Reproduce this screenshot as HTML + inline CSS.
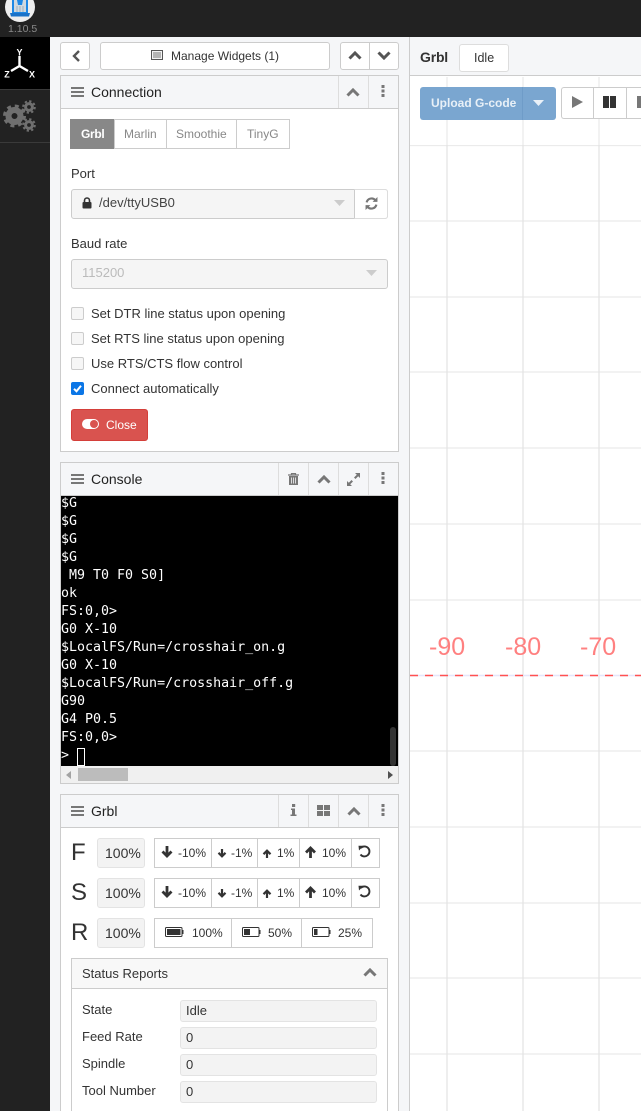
<!DOCTYPE html>
<html><head><meta charset="utf-8"><style>
*{box-sizing:border-box}
html,body{margin:0;padding:0;width:641px;height:1111px;overflow:hidden}
body{background:#f5f6f8;font:14px/20px "Liberation Sans",sans-serif;color:#333}
#w{position:absolute;left:0;top:0;width:641px;height:1111px;overflow:hidden;background:#f5f6f8}
.a{position:absolute}
.t{position:absolute;white-space:nowrap}
.btn{position:absolute;background:#fff;border:1px solid #ccc;border-radius:3px}
.panel{position:absolute;left:60px;width:339px;background:#fff;border:1px solid #ccc}
.head{position:absolute;background:#f5f6f8;border-bottom:1px solid #ccc;left:0;top:0;width:337px;height:33px}
.sep{position:absolute;top:0;width:1px;height:32px;background:#ddd}
.cb{position:absolute;left:71px;width:13px;height:13px;border:1px solid #ccc;border-radius:2px;background:#f6f6f6}
.box{position:absolute;background:#f3f3f3;border:1px solid #e3e3e3;border-radius:3px}
.grp{position:absolute;border:1px solid #ccc;background:#fff}
.s{position:absolute;top:0;width:1px;height:100%;background:#ccc}
svg{position:absolute;display:block}
.m{font-family:"DejaVu Sans Mono",monospace;font-size:13.3px;color:#fff;line-height:18px;position:absolute;left:61px;white-space:pre}
</style></head><body><div id="w">

<div class="a" style="left:0;top:0;width:641px;height:37px;background:#222"></div>
<div class="a" style="left:0;top:37px;width:50px;height:1074px;background:#222"></div>
<div class="a" style="left:0;top:37px;width:50px;height:52px;background:#000"></div>
<div class="a" style="left:0;top:89px;width:50px;height:1px;background:#3a3a3a"></div>
<div class="a" style="left:0;top:142px;width:50px;height:1px;background:#3a3a3a"></div>

<div class="a" style="left:5px;top:-8px;width:30px;height:30px;border-radius:50%;background:#eee"></div>
<svg style="left:10px;top:0" width="20" height="17" viewBox="0 0 20 17"><path d="M3 0V13H17V0" fill="#cfd8df" stroke="#1e88e5" stroke-width="2"/><path d="M7 0H13L12 5H8Z" fill="#1e88e5"/><path d="M7 6V12M10 6V12M13 6V12" stroke="#9fb0bd"/><path d="M0 13H20L19 16.500H1Z" fill="#1a72c8"/></svg>
<div class="t" style="left:8px;top:22px;font-size:10.5px;line-height:14px;color:#8a8a8a">1.10.5</div>

<svg style="left:0;top:45px" width="50" height="38" viewBox="0 0 50 38"><path d="M19.500 11V21M19.500 21L11 26M19.500 21L28 26" stroke="#fff" stroke-width="2.400" fill="none"/><text x="19.500" y="10.500" font-size="9" font-weight="bold" text-anchor="middle" fill="#fff" font-family="Liberation Sans">Y</text><text x="7" y="32.500" font-size="9" font-weight="bold" text-anchor="middle" fill="#fff" font-family="Liberation Sans">Z</text><text x="32" y="32.500" font-size="9" font-weight="bold" text-anchor="middle" fill="#fff" font-family="Liberation Sans">X</text></svg>

<svg style="left:3px;top:99px" width="34" height="34" viewBox="0 0 34 34" fill="#6f6f6f">
<circle cx="11.500" cy="17" r="6" fill="none" stroke="#6f6f6f" stroke-width="6"/>
<circle cx="11.500" cy="17" r="10" fill="none" stroke="#6f6f6f" stroke-width="3" stroke-dasharray="4 3.850"/>
<circle cx="26" cy="8" r="3.400" fill="none" stroke="#6f6f6f" stroke-width="3"/>
<circle cx="26" cy="8" r="5.800" fill="none" stroke="#6f6f6f" stroke-width="2" stroke-dasharray="2.300 2.250"/>
<circle cx="26" cy="26" r="3.400" fill="none" stroke="#6f6f6f" stroke-width="3"/>
<circle cx="26" cy="26" r="5.800" fill="none" stroke="#6f6f6f" stroke-width="2" stroke-dasharray="2.300 2.250"/>
</svg>

<!-- Top controls -->
<div class="btn" style="left:60px;top:42px;width:30px;height:28px"></div>
<svg style="left:71px;top:50px" width="10" height="12" viewBox="0 0 10 12"><path d="M8 1L3 6L8 11" fill="none" stroke="#555" stroke-width="2.400"/></svg>
<div class="btn" style="left:100px;top:42px;width:230px;height:28px"></div>
<svg style="left:151px;top:50px" width="12" height="10" viewBox="0 0 12 10"><rect x=".5" y=".5" width="11" height="9" fill="#f2f2f2" stroke="#555"/><path d="M2 3h8M2 5h8M2 7h8" stroke="#777"/></svg>
<div class="t" style="left:171px;top:46px;font-size:12px;color:#333">Manage Widgets (1)</div>
<div class="btn" style="left:340px;top:42px;width:59px;height:28px"></div>
<div class="a" style="left:369px;top:42px;width:1px;height:28px;background:#ccc"></div>
<svg style="left:348px;top:51px" width="14" height="9" viewBox="0 0 14 9"><path d="M1.500 7.500L7 2L12.500 7.500" fill="none" stroke="#555" stroke-width="3"/></svg>
<svg style="left:377px;top:51px" width="14" height="9" viewBox="0 0 14 9"><path d="M1.500 1.500L7 7L12.500 1.500" fill="none" stroke="#555" stroke-width="3"/></svg>

<!-- Connection panel -->
<div class="panel" style="top:75px;height:377px"><div class="head"></div><div class="sep" style="left:277px"></div><div class="sep" style="left:307px"></div></div>
<svg style="left:71px;top:87px" width="13" height="11" viewBox="0 0 13 11"><path d="M0 1h13M0 5h13M0 9h13" stroke="#777" stroke-width="2"/></svg>
<div class="t" style="left:91px;top:82px;font-size:14px;color:#222">Connection</div>
<svg style="left:346px;top:88px" width="14" height="9" viewBox="0 0 14 9"><path d="M1.500 7.500L7 2L12.500 7.500" fill="none" stroke="#777" stroke-width="3"/></svg>
<svg style="left:381px;top:85px" width="4" height="12" viewBox="0 0 4 12" fill="#777"><rect x="0.500" y="0" width="3" height="3"/><rect x="0.500" y="4.500" width="3" height="3"/><rect x="0.500" y="9" width="3" height="3"/></svg>

<div class="grp" style="left:70px;top:119px;width:220px;height:30px"></div>
<div class="a" style="left:70px;top:119px;width:44px;height:30px;background:#888"></div>
<div class="a" style="left:166px;top:119px;width:1px;height:30px;background:#ccc"></div>
<div class="a" style="left:236px;top:119px;width:1px;height:30px;background:#ccc"></div>
<div class="a" style="left:114px;top:119px;width:1px;height:30px;background:#ccc"></div>
<div class="t" style="left:81px;top:124px;font-size:12px;color:#fff;font-weight:bold;letter-spacing:-.3px">Grbl</div>
<div class="t" style="left:124px;top:124px;font-size:12px;color:#888">Marlin</div>
<div class="t" style="left:176px;top:124px;font-size:12px;color:#888">Smoothie</div>
<div class="t" style="left:247px;top:124px;font-size:12px;color:#888">TinyG</div>

<div class="t" style="left:71px;top:164px;font-size:13px;color:#333">Port</div>
<div class="a" style="left:71px;top:189px;width:317px;height:30px;background:#f5f5f5;border:1px solid #ccc;border-radius:3px"></div>
<div class="a" style="left:354px;top:189px;width:34px;height:30px;background:#fff;border:1px solid #ddd;border-left:1px solid #ccc;border-radius:0 3px 3px 0"></div>
<svg style="left:82px;top:197px" width="10" height="12" viewBox="0 0 10 12"><path d="M2.500 5V3.500a2.500 2.500 0 0 1 5 0V5" fill="none" stroke="#333" stroke-width="1.600"/><rect x="0.500" y="5" width="9" height="6.500" rx="1" fill="#333"/></svg>
<div class="t" style="left:99px;top:193px;font-size:13px;color:#444">/dev/ttyUSB0</div>
<svg style="left:334px;top:200px" width="11" height="6" viewBox="0 0 11 6"><path d="M0 0H11L5.500 6Z" fill="#ccc"/></svg>
<svg style="left:365px;top:197px" width="13" height="13" viewBox="0 0 12 12"><path d="M1.500 5A4.700 4.700 0 0 1 9.500 2.800M10.500 7A4.700 4.700 0 0 1 2.500 9.200" fill="none" stroke="#777" stroke-width="2"/><path d="M11.500 0V4.500H7ZM.5 12V7.500H5Z" fill="#777"/></svg>

<div class="t" style="left:71px;top:234px;font-size:13px;color:#333">Baud rate</div>
<div class="a" style="left:71px;top:259px;width:317px;height:30px;background:#f5f5f5;border:1px solid #ccc;border-radius:3px"></div>
<div class="t" style="left:82px;top:263px;font-size:13px;color:#bbb">115200</div>
<svg style="left:366px;top:270px" width="11" height="6" viewBox="0 0 11 6"><path d="M0 0H11L5.500 6Z" fill="#ccc"/></svg>

<div class="cb" style="top:307px"></div><div class="t" style="left:91px;top:304px;font-size:13px;color:#333">Set DTR line status upon opening</div>
<div class="cb" style="top:332px"></div><div class="t" style="left:91px;top:329px;font-size:13px;color:#333">Set RTS line status upon opening</div>
<div class="cb" style="top:357px"></div><div class="t" style="left:91px;top:354px;font-size:13px;color:#333">Use RTS/CTS flow control</div>
<div class="a" style="left:71px;top:382px;width:13px;height:13px;border-radius:2px;background:#0b76e6"></div>
<svg style="left:71px;top:382px" width="13" height="13" viewBox="0 0 13 13"><path d="M3 6.800L5.500 9.300L10 3.800" fill="none" stroke="#fff" stroke-width="2"/></svg>
<div class="t" style="left:91px;top:379px;font-size:13px;color:#333">Connect automatically</div>

<div class="a" style="left:71px;top:409px;width:77px;height:32px;background:#d9534f;border:1px solid #d43f3a;border-radius:3px"></div>
<div class="a" style="left:82px;top:419px;width:17px;height:10px;border-radius:5px;background:#fff"></div>
<div class="a" style="left:90px;top:420px;width:8px;height:8px;border-radius:50%;background:#d9534f"></div>
<div class="t" style="left:106px;top:415px;font-size:12px;color:#fff">Close</div>

<!-- Console -->
<div class="panel" style="top:462px;height:322px"><div class="head"></div><div class="sep" style="left:217px"></div><div class="sep" style="left:247px"></div><div class="sep" style="left:277px"></div><div class="sep" style="left:307px"></div></div>
<svg style="left:71px;top:474px" width="13" height="11" viewBox="0 0 13 11"><path d="M0 1h13M0 5h13M0 9h13" stroke="#777" stroke-width="2"/></svg>
<div class="t" style="left:91px;top:469px;font-size:14px;color:#222">Console</div>
<svg style="left:288px;top:473px" width="11" height="12" viewBox="0 0 11 12"><path d="M0 2h11M3.500 2V.5h4V2" fill="none" stroke="#777" stroke-width="1.200"/><path d="M1 3h9v9H1z" fill="#777"/><path d="M3.500 4.500v6M5.500 4.500v6M7.500 4.500v6" stroke="#f5f6f8" stroke-width=".8"/></svg>
<svg style="left:317px;top:475px" width="14" height="9" viewBox="0 0 14 9"><path d="M1.500 7.500L7 2L12.500 7.500" fill="none" stroke="#777" stroke-width="3"/></svg>
<svg style="left:347px;top:473px" width="13" height="13" viewBox="0 0 13 13" fill="#777"><path d="M8 0h5v5L11.200 3.200 8.500 6 7 4.500 9.800 1.800zM5 13H0V8l1.800 1.800L4.500 7 6 8.500 3.200 11.200z"/></svg>
<svg style="left:381px;top:472px" width="4" height="12" viewBox="0 0 4 12" fill="#777"><rect x="0.500" y="0" width="3" height="3"/><rect x="0.500" y="4.500" width="3" height="3"/><rect x="0.500" y="9" width="3" height="3"/></svg>

<div class="a" style="left:61px;top:496px;width:337px;height:270px;background:#000;overflow:hidden">
<div class="m" style="left:0;top:-1px">$G
$G
$G
$G
 M9 T0 F0 S0]
ok
FS:0,0&gt;
G0 X-10
$LocalFS/Run=/crosshair_on.g
G0 X-10
$LocalFS/Run=/crosshair_off.g
G90
G4 P0.5
FS:0,0&gt;
&gt;</div></div>
<div class="a" style="left:77px;top:748px;width:8px;height:18px;border:1px solid #fff"></div>
<div class="a" style="left:390px;top:727px;width:6px;height:39px;border-radius:3px;background:#333"></div>
<div class="a" style="left:61px;top:766px;width:337px;height:17px;background:#f0f0f0"></div>
<div class="a" style="left:78px;top:768px;width:50px;height:13px;background:#bcbcbc"></div>
<svg style="left:66px;top:771px" width="5" height="8" viewBox="0 0 5 8"><path d="M5 0V8L0 4Z" fill="#a3a3a3"/></svg>
<svg style="left:388px;top:771px" width="5" height="8" viewBox="0 0 5 8"><path d="M0 0V8L5 4Z" fill="#505050"/></svg>

<!-- Grbl panel -->
<div class="panel" style="top:794px;height:330px"><div class="head"></div><div class="sep" style="left:217px"></div><div class="sep" style="left:247px"></div><div class="sep" style="left:277px"></div><div class="sep" style="left:307px"></div></div>
<svg style="left:71px;top:806px" width="13" height="11" viewBox="0 0 13 11"><path d="M0 1h13M0 5h13M0 9h13" stroke="#777" stroke-width="2"/></svg>
<div class="t" style="left:91px;top:801px;font-size:14px;color:#222">Grbl</div>
<svg style="left:290px;top:804px" width="7" height="12" viewBox="0 0 7 12" fill="#777"><rect x="2" y="0" width="3.200" height="3"/><path d="M1 4.500H5V10.500H6.500V12H.5V10.500H2V6H1Z"/></svg>
<svg style="left:317px;top:805px" width="13" height="11" viewBox="0 0 13 11" fill="#777"><rect width="6" height="5"/><rect x="7" width="6" height="5"/><rect y="6" width="6" height="5"/><rect x="7" y="6" width="6" height="5"/></svg>
<svg style="left:347px;top:807px" width="14" height="9" viewBox="0 0 14 9"><path d="M1.500 7.500L7 2L12.500 7.500" fill="none" stroke="#777" stroke-width="3"/></svg>
<svg style="left:381px;top:804px" width="4" height="12" viewBox="0 0 4 12" fill="#777"><rect x="0.500" y="0" width="3" height="3"/><rect x="0.500" y="4.500" width="3" height="3"/><rect x="0.500" y="9" width="3" height="3"/></svg>

<!-- F row -->
<div class="t" style="left:71px;top:841px;font-size:24px;line-height:24px;color:#333">F</div>
<div class="box" style="left:97px;top:838px;width:48px;height:30px"></div>
<div class="t" style="left:105px;top:843px;font-size:14px;color:#333">100%</div>
<div class="grp" style="left:154px;top:838px;width:226px;height:30px"><div class="s" style="left:56px"></div><div class="s" style="left:102px"></div><div class="s" style="left:144px"></div><div class="s" style="left:196px"></div></div>
<svg style="left:161px;top:845px" width="12" height="13" viewBox="0 0 12 13"><path d="M6 1V11M1.500 6.500L6 11L10.500 6.500" fill="none" stroke="#333" stroke-width="2.800"/></svg>
<div class="t" style="left:178px;top:843px;font-size:12px;color:#333">-10%</div>
<svg style="left:217px;top:848px" width="10" height="10" viewBox="0 0 10 10"><path d="M5 1V8M1.500 4.800L5 8.300L8.500 4.800" fill="none" stroke="#333" stroke-width="2.200"/></svg>
<div class="t" style="left:231px;top:843px;font-size:12px;color:#333">-1%</div>
<svg style="left:262px;top:849px" width="10" height="10" viewBox="0 0 10 10"><path d="M5 9V2M1.500 5.200L5 1.700L8.500 5.200" fill="none" stroke="#333" stroke-width="2.200"/></svg>
<div class="t" style="left:277px;top:843px;font-size:12px;color:#333">1%</div>
<svg style="left:304px;top:846px" width="13" height="13" viewBox="0 0 13 13"><path d="M6.500 12V2M2 6.500L6.500 2L11 6.500" fill="none" stroke="#333" stroke-width="2.800"/></svg>
<div class="t" style="left:322px;top:843px;font-size:12px;color:#333">10%</div>
<svg style="left:358px;top:845px" width="13" height="13" viewBox="0 0 13 13"><path d="M2.800 3A5 5 0 1 1 2.500 9.500" fill="none" stroke="#333" stroke-width="1.900"/><path d="M0.500 .8L5.500 .8L1 5.500Z" fill="#333"/></svg>

<!-- S row -->
<div class="t" style="left:71px;top:881px;font-size:24px;line-height:24px;color:#333">S</div>
<div class="box" style="left:97px;top:878px;width:48px;height:30px"></div>
<div class="t" style="left:105px;top:883px;font-size:14px;color:#333">100%</div>
<div class="grp" style="left:154px;top:878px;width:226px;height:30px"><div class="s" style="left:56px"></div><div class="s" style="left:102px"></div><div class="s" style="left:144px"></div><div class="s" style="left:196px"></div></div>
<svg style="left:161px;top:885px" width="12" height="13" viewBox="0 0 12 13"><path d="M6 1V11M1.500 6.500L6 11L10.500 6.500" fill="none" stroke="#333" stroke-width="2.800"/></svg>
<div class="t" style="left:178px;top:883px;font-size:12px;color:#333">-10%</div>
<svg style="left:217px;top:888px" width="10" height="10" viewBox="0 0 10 10"><path d="M5 1V8M1.500 4.800L5 8.300L8.500 4.800" fill="none" stroke="#333" stroke-width="2.200"/></svg>
<div class="t" style="left:231px;top:883px;font-size:12px;color:#333">-1%</div>
<svg style="left:262px;top:889px" width="10" height="10" viewBox="0 0 10 10"><path d="M5 9V2M1.500 5.200L5 1.700L8.500 5.200" fill="none" stroke="#333" stroke-width="2.200"/></svg>
<div class="t" style="left:277px;top:883px;font-size:12px;color:#333">1%</div>
<svg style="left:304px;top:886px" width="13" height="13" viewBox="0 0 13 13"><path d="M6.500 12V2M2 6.500L6.500 2L11 6.500" fill="none" stroke="#333" stroke-width="2.800"/></svg>
<div class="t" style="left:322px;top:883px;font-size:12px;color:#333">10%</div>
<svg style="left:358px;top:885px" width="13" height="13" viewBox="0 0 13 13"><path d="M2.800 3A5 5 0 1 1 2.500 9.500" fill="none" stroke="#333" stroke-width="1.900"/><path d="M0.500 .8L5.500 .8L1 5.500Z" fill="#333"/></svg>

<!-- R row -->
<div class="t" style="left:71px;top:921px;font-size:24px;line-height:24px;color:#333">R</div>
<div class="box" style="left:97px;top:918px;width:48px;height:30px"></div>
<div class="t" style="left:105px;top:923px;font-size:14px;color:#333">100%</div>
<div class="grp" style="left:154px;top:918px;width:219px;height:30px"><div class="s" style="left:76px"></div><div class="s" style="left:146px"></div></div>
<svg style="left:165px;top:927px" width="19" height="10" viewBox="0 0 19 10"><rect x=".5" y=".5" width="16.500" height="9" rx="1" fill="none" stroke="#333"/><rect x="2" y="2" width="13.500" height="6" fill="#333"/><rect x="17.500" y="3" width="1" height="4" fill="#333"/></svg>
<div class="t" style="left:192px;top:923px;font-size:12px;color:#333">100%</div>
<svg style="left:242px;top:927px" width="19" height="10" viewBox="0 0 19 10"><rect x=".5" y=".5" width="16.500" height="9" rx="1" fill="none" stroke="#333"/><rect x="2" y="2" width="6" height="6" fill="#333"/><rect x="17.500" y="3" width="1" height="4" fill="#333"/></svg>
<div class="t" style="left:268px;top:923px;font-size:12px;color:#333">50%</div>
<svg style="left:312px;top:927px" width="19" height="10" viewBox="0 0 19 10"><rect x=".5" y=".5" width="16.500" height="9" rx="1" fill="none" stroke="#333"/><rect x="2" y="2" width="3.500" height="6" fill="#333"/><rect x="17.500" y="3" width="1" height="4" fill="#333"/></svg>
<div class="t" style="left:338px;top:923px;font-size:12px;color:#333">25%</div>

<!-- Status reports -->
<div class="a" style="left:71px;top:958px;width:317px;height:170px;background:#fff;border:1px solid #ccc"></div>
<div class="a" style="left:72px;top:959px;width:315px;height:30px;background:#f8f8f8;border-bottom:1px solid #ccc"></div>
<div class="t" style="left:82px;top:964px;font-size:13px;color:#333">Status Reports</div>
<svg style="left:363px;top:968px" width="14" height="9" viewBox="0 0 14 9"><path d="M1.500 7.500L7 2L12.500 7.500" fill="none" stroke="#777" stroke-width="3"/></svg>
<div class="t" style="left:82px;top:1000px;font-size:13px;color:#333">State</div>
<div class="box" style="left:180px;top:1000px;width:197px;height:22px"></div>
<div class="t" style="left:186px;top:1001px;font-size:13px;color:#333">Idle</div>
<div class="t" style="left:82px;top:1027px;font-size:13px;color:#333">Feed Rate</div>
<div class="box" style="left:180px;top:1027px;width:197px;height:22px"></div>
<div class="t" style="left:186px;top:1028px;font-size:13px;color:#333">0</div>
<div class="t" style="left:82px;top:1054px;font-size:13px;color:#333">Spindle</div>
<div class="box" style="left:180px;top:1054px;width:197px;height:22px"></div>
<div class="t" style="left:186px;top:1055px;font-size:13px;color:#333">0</div>
<div class="t" style="left:82px;top:1081px;font-size:13px;color:#333">Tool Number</div>
<div class="box" style="left:180px;top:1081px;width:197px;height:22px"></div>
<div class="t" style="left:186px;top:1082px;font-size:13px;color:#333">0</div>

<!-- Right visualizer -->
<div class="a" style="left:409px;top:37px;width:232px;height:1074px;background:#fff;border-left:1px solid #ccc"></div>
<svg style="left:410px;top:145px" width="231" height="966" viewBox="0 0 231 966">
<g stroke="#ebebeb" stroke-width="1.300">
<path d="M0 .5H231M0 76H231M0 152H231M0 227H231M0 303H231M0 379H231M0 455H231M0 606H231M0 682H231M0 758H231M0 833H231M0 909H231"/>
</g>
<g stroke="#e4e4e4" stroke-width="1.300"><path d="M37 0V966M113 0V966M189 0V966"/></g>
<path d="M0 530.500H231" stroke="#e6e6fa" stroke-width="1.500"/>
<path d="M0 530.500H231" stroke="#ff5252" stroke-width="1.500" stroke-dasharray="8 7"/>
</svg>
<div class="t" style="left:429px;top:633px;font-size:25px;line-height:28px;color:#ff8080">-90</div>
<div class="t" style="left:505px;top:633px;font-size:25px;line-height:28px;color:#ff8080">-80</div>
<div class="t" style="left:580px;top:633px;font-size:25px;line-height:28px;color:#ff8080">-70</div>

<div class="a" style="left:410px;top:37px;width:231px;height:39px;background:#f5f6f8;border-bottom:1px solid #ccc"></div>
<div class="t" style="left:420px;top:47px;font-size:14px;color:#333;font-weight:bold;letter-spacing:-.2px">Grbl</div>
<div class="a" style="left:459px;top:44px;width:50px;height:28px;background:#fff;border:1px solid #ddd;border-radius:3px"></div>
<div class="t" style="left:474px;top:48px;font-size:12.500px;color:#333">Idle</div>

<svg style="left:410px;top:77px" width="231" height="68" viewBox="0 0 231 68"><g stroke="#ebebeb" stroke-width="1.300"><path d="M37 0V68M113 0V68M189 0V68"/></g></svg>
<div class="a" style="left:420px;top:87px;width:136px;height:33px;background:#7aa6d0;border-radius:3px"></div>
<div class="a" style="left:522px;top:87px;width:1px;height:33px;background:#6f9cc8"></div>
<div class="t" style="left:431px;top:93px;font-size:12px;color:#e8f0f7;font-weight:bold">Upload G-code</div>
<svg style="left:533px;top:100px" width="11" height="6" viewBox="0 0 11 6"><path d="M0 0H11L5.500 6Z" fill="#eaf1f8"/></svg>
<div class="a" style="left:561px;top:87px;width:80px;height:32px;background:#fff;border:1px solid #ccc;border-right:none;border-radius:3px 0 0 3px"></div>
<div class="a" style="left:593px;top:87px;width:1px;height:32px;background:#ccc"></div>
<div class="a" style="left:626px;top:87px;width:1px;height:32px;background:#ccc"></div>
<svg style="left:571px;top:96px" width="13" height="12" viewBox="0 0 13 12"><path d="M1 0L12 6L1 12Z" fill="#777"/></svg>
<svg style="left:603px;top:96px" width="13" height="12" viewBox="0 0 13 12" fill="#333"><rect x="0" width="6" height="12"/><rect x="7" width="6" height="12"/></svg>
<div class="a" style="left:637px;top:96px;width:4px;height:12px;background:#777"></div>

</div></body></html>
